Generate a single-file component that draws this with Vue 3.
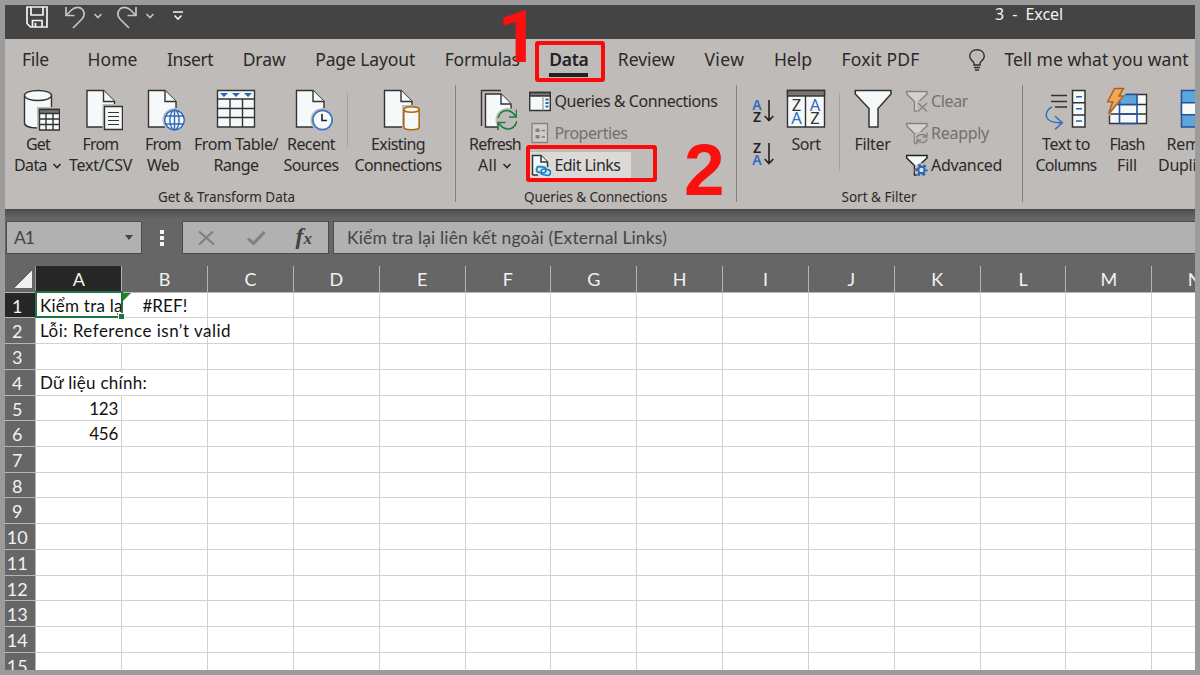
<template>
    <div class="window">
        <header class="titlebar">
            <div class="quick-access">
                <svg class="qa-save" viewBox="0 0 24 24" fill="none" stroke="#f4f4f4" stroke-width="1.7">
                    <path d="M2 2H22V22H5.500L2 18.500Z" />
                    <path d="M6 2V10H18V2M7.500 22V15.500H17V22M10.500 18V22" />
                </svg>
                <svg class="qa-undo" viewBox="0 0 22 24" fill="none" stroke="#c4c4c4" stroke-width="1.7">
                    <path d="M2 2V10.500H10.500M2.500 10L7.500 5C11 1.500 16 1.500 18.500 4.500C21 7.500 20.500 11.500 18 14L9 23" />
                </svg>
                <svg class="qa-chevron" viewBox="0 0 10 8" fill="none" stroke="#c4c4c4" stroke-width="1.6"><path d="M1.500 2L5 5.500L8.500 2" /></svg>
                <svg class="qa-redo" viewBox="0 0 22 24" fill="none" stroke="#c4c4c4" stroke-width="1.7">
                    <path d="M20 2V10.500H11.500M19.500 10L14.500 5C11 1.500 6 1.500 3.500 4.500C1 7.500 1.500 11.500 4 14L13 23" />
                </svg>
                <svg class="qa-chevron" viewBox="0 0 10 8" fill="none" stroke="#c4c4c4" stroke-width="1.6"><path d="M1.500 2L5 5.500L8.500 2" /></svg>
                <svg class="qa-more" viewBox="0 0 12 12" fill="none" stroke="#f4f4f4" stroke-width="1.6"><path d="M1 2H11M2.500 5.500L6 9L9.500 5.500" /></svg>
            </div>
            <div class="doc-title"><span v-fit="68" class="t">3&nbsp; -&nbsp; Excel</span></div>
        </header>

        <nav class="tabs">
            <div v-for="tab in tabs" :key="tab.name" class="tab" :class="{ active: tab.active, first: tab.name === 'File' }">
                <span v-fit="tab.w" class="t">{{ tab.name }}</span>
                <div v-if="tab.active" class="red-box tab-box"></div>
                <span v-if="tab.active" class="step step-one">1</span>
            </div>
            <svg class="bulb" viewBox="0 0 18 24" fill="none" stroke="#2f2d2c" stroke-width="1.4">
                <path d="M6 17V15.500C6 13 1.700 12 1.700 8.200C1.700 4.300 4.800 1.700 9 1.700S16.300 4.300 16.300 8.200C16.300 12 12 13 12 15.500V17ZM6 19.500H12M7 22H11" />
            </svg>
            <span v-fit="184" class="t">Tell me what you want</span>
        </nav>

        <section class="ribbon">
            <div class="group group-get">
                <div class="group-body">
                    <div class="big w52">
                        <svg class="icon" viewBox="0 0 44 44" fill="#f5f9f9" stroke="#333" stroke-width="1.4">
                            <path d="M8.500 8.500V36C8.500 39 14 41 22 41S35.500 39 35.500 36V8.500" />
                            <ellipse cx="22" cy="8.500" rx="13.500" ry="5" />
                            <path d="M21 20H44V44H21Z" fill="#bfbbb8" stroke="none" />
                            <path d="M23.500 22.500H43.500V43H23.500Z" />
                            <path d="M23.500 22.500H43.500V26.500H23.500Z" fill="#777" />
                            <path d="M23.500 32H43.500M23.500 37.500H43.500M30 26.500V43M37 26.500V43" />
                        </svg>
                        <span v-fit="24" class="t">Get</span>
                        <div class="drop"><span v-fit="33" class="t">Data</span><Chevron /></div>
                    </div>
                    <div class="big w73">
                        <svg class="icon" viewBox="0 0 44 44" fill="#f5f9f9" stroke="#333" stroke-width="1.4">
                            <path d="M8 3.500H24.500L35.500 14.500V40H8Z" />
                            <path d="M24.500 3.500V14.500H35.500" />
                            <path d="M23.500 17H44V44H23.500Z" fill="#bfbbb8" stroke="none" />
                            <path d="M25.500 19.500H43.500V42.500H25.500Z" />
                            <path d="M29 25.500H40M29 29.500H40M29 33.500H40M29 37.500H40" stroke-width="1.2" />
                        </svg>
                        <span v-fit="36" class="t">From</span>
                        <span v-fit="63" class="t">Text/CSV</span>
                    </div>
                    <div class="big w52">
                        <svg class="icon" viewBox="0 0 44 44" fill="#f5f9f9" stroke="#333" stroke-width="1.4">
                            <path d="M7.500 3.500H24L35 14.500V40H7.500Z" />
                            <path d="M24 3.500V14.500H35" />
                            <circle cx="33.500" cy="33" r="12" fill="#bfbbb8" stroke="none" />
                            <g stroke="#2f69bd">
                                <circle cx="33.500" cy="33" r="9.800" />
                                <ellipse cx="33.500" cy="33" rx="4.600" ry="9.800" />
                                <path d="M33.500 23V43M24.800 29H42.200M24.800 37H42.200" />
                            </g>
                        </svg>
                        <span v-fit="36" class="t">From</span>
                        <span v-fit="32" class="t">Web</span>
                    </div>
                    <div class="big w94">
                        <svg class="icon" viewBox="0 0 44 44" fill="#f5f9f9" stroke="#333" stroke-width="1.4">
                            <path d="M3.500 3.500H40.500V40H3.500Z" />
                            <path d="M3.500 12H40.500M3.500 21.500H40.500M3.500 30.500H40.500M16 12V40M28.500 12V40" />
                            <path d="M6 6H14L10 10ZM18 6H26L22 10ZM30 6H38L34 10Z" fill="#2c66b8" stroke="none" />
                        </svg>
                        <span v-fit="84" class="t">From Table/</span>
                        <span v-fit="45" class="t">Range</span>
                    </div>
                    <div class="big w56">
                        <svg class="icon" viewBox="0 0 44 44" fill="#f5f9f9" stroke="#333" stroke-width="1.4">
                            <path d="M7.500 3.500H24L35 14.500V40H7.500Z" />
                            <path d="M24 3.500V14.500H35" />
                            <circle cx="33.500" cy="33" r="12" fill="#bfbbb8" stroke="none" />
                            <circle cx="33.500" cy="33" r="9.700" stroke="#3c74c4" stroke-width="1.7" />
                            <path d="M33 27V33.500H38" fill="none" stroke="#222" stroke-width="1.6" />
                        </svg>
                        <span v-fit="48" class="t">Recent</span>
                        <span v-fit="55" class="t">Sources</span>
                    </div>
                    <i class="inner-sep"></i>
                    <div class="big w86">
                        <svg class="icon" viewBox="0 0 44 44" fill="#f5f9f9" stroke="#333" stroke-width="1.4">
                            <path d="M8.500 3.500H25L36 14.500V40H8.500Z" />
                            <path d="M25 3.500V14.500H36" />
                            <path d="M26 18H44V44H26Z" fill="#bfbbb8" stroke="none" />
                            <g stroke="#ab6a14" stroke-width="1.600">
                                <path d="M27.800 22.500V40C27.800 41.500 31 42.700 35.500 42.700S43.200 41.500 43.200 40V22.500" />
                                <ellipse cx="35.500" cy="22.500" rx="7.700" ry="2.700" />
                            </g>
                        </svg>
                        <span v-fit="54" class="t">Existing</span>
                        <span v-fit="87" class="t">Connections</span>
                    </div>
                </div>
                <div class="group-name"><span v-fit="137" class="t">Get &amp; Transform Data</span></div>
            </div>

            <div class="group group-queries">
                <div class="group-body">
                    <div class="big w58">
                        <svg class="icon" viewBox="0 0 44 44" fill="#f5f9f9" stroke="#333" stroke-width="1.4">
                            <path d="M8.500 39V3.500H28" fill="none" />
                            <path d="M12.500 7H28L38 17V40H12.500Z" />
                            <path d="M28 7V17H38" />
                            <circle cx="34.500" cy="33" r="12" fill="#bfbbb8" stroke="none" />
                            <g fill="none" stroke="#1e7e3c" stroke-width="1.600">
                                <path d="M25 31C26.500 26 30 23.500 34 23.500C37.500 23.500 40 25.500 42.500 29M43.500 22.500V30H36" />
                                <path d="M44 34C42.500 39.500 39 42 35 42C31.500 42 28.500 40 26 36.500M25 43V35.500H32.500" />
                            </g>
                        </svg>
                        <span v-fit="52" class="t">Refresh</span>
                        <div class="drop"><span v-fit="19" class="t">All</span><Chevron /></div>
                    </div>
                    <div class="list list-queries">
                        <div class="row">
                            <svg viewBox="0 0 24 24" fill="#f5f9f9" stroke="#333" stroke-width="1.4">
                                <path d="M1.700 2.500H22.300V20.500H1.700Z" />
                                <path d="M1.700 2.500H22.300V6H1.700Z" fill="#777" />
                                <path d="M15 6V20.500" stroke="#888" stroke-width="1" />
                                <path d="M19 8.500V18.500" stroke="#2c66b8" stroke-width="3" stroke-dasharray="2 1.500" />
                            </svg>
                            <span v-fit="163" class="t">Queries &amp; Connections</span>
                        </div>
                        <div class="row disabled">
                            <svg viewBox="0 0 24 24" fill="#cfcccb" stroke="#858280" stroke-width="1.3">
                                <path d="M4 1.500H19.500V20.500H4Z" />
                                <path d="M7.500 6.500H11.500V10H7.500ZM7.500 13H11.500V16.500H7.500Z" fill="#858280" stroke="none" />
                                <path d="M13.500 8.500H17M13.500 15H17" stroke-width="1.500" />
                            </svg>
                            <span v-fit="73" class="t">Properties</span>
                        </div>
                        <div class="row highlighted">
                            <svg viewBox="0 0 24 24" fill="#f5f9f9" stroke="#333" stroke-width="1.5">
                                <path d="M4.500 21V1.500H13L19.500 8V18" />
                                <path d="M13 1.500V8H19.500" />
                                <g stroke="#e0e6ea" stroke-width="5" fill="none">
                                    <rect x="9" y="13" width="8" height="5.500" rx="2.700" />
                                    <rect x="13.500" y="15.500" width="8" height="5.500" rx="2.700" />
                                </g>
                                <path d="M4.500 21H10" />
                                <g stroke="#2085c5" stroke-width="1.700" fill="none">
                                    <rect x="8.500" y="12.800" width="9.500" height="5.800" rx="2.900" transform="rotate(8 13 16)" />
                                    <rect x="13" y="15.300" width="9.500" height="5.800" rx="2.900" transform="rotate(8 18 18)" />
                                </g>
                            </svg>
                            <span v-fit="66" class="t">Edit Links</span>
                            <div class="red-box link-box"></div>
                            <span class="step step-two">2</span>
                        </div>
                    </div>
                </div>
                <div class="group-name"><span v-fit="143" class="t">Queries &amp; Connections</span></div>
            </div>

            <div class="group group-sort">
                <div class="group-body">
                    <div class="order">
                        <svg v-for="(pair, i) in ['AZ', 'ZA']" :key="pair" viewBox="0 0 24 28">
                            <text x="6" y="12.500" :class="{ blue: i === 0 }">{{ pair[0] }}</text>
                            <text x="6" y="25" :class="{ blue: i === 1 }">{{ pair[1] }}</text>
                            <path d="M18 3V23.500M13.700 19L18 23.500L22.300 19" fill="none" stroke="#222" stroke-width="1.6" />
                        </svg>
                    </div>
                    <div class="big w46">
                        <svg class="icon sort-icon" viewBox="0 0 44 44" fill="#f5f9f9" stroke="#333" stroke-width="1.4">
                            <path d="M3.500 3.500H40.500V40H3.500Z" />
                            <path d="M3.500 3.500H40.500V9H3.500Z" fill="#777" />
                            <path d="M21.500 9V40" />
                            <text x="12.500" y="23.500">Z</text><text x="12.500" y="37" class="blue">A</text>
                            <text x="31" y="23.500" class="blue">A</text><text x="31" y="37">Z</text>
                        </svg>
                        <span v-fit="29" class="t">Sort</span>
                    </div>
                    <i class="inner-sep tall"></i>
                    <div class="big w47">
                        <svg class="icon" viewBox="0 0 44 44" fill="#f5f9f9" stroke="#333" stroke-width="1.5">
                            <path d="M4.300 3.500H40V7L27 21.500V40H18V21.500L4.300 7Z" />
                        </svg>
                        <span v-fit="36" class="t">Filter</span>
                    </div>
                    <div class="list list-filter">
                        <div class="row disabled">
                            <svg viewBox="0 0 24 24" fill="#d4d1cf" stroke="#858280" stroke-width="1.4">
                                <path d="M1.700 1.500H22V4L14 11.500V21H9.500V11.500L1.700 4Z" />
                                <path d="M12 11H24V24H12Z" fill="#bfbbb8" stroke="none" />
                                <path d="M13 13L22 21.500M22 13L13 21.500" />
                            </svg>
                            <span v-fit="37" class="t">Clear</span>
                        </div>
                        <div class="row disabled">
                            <svg viewBox="0 0 24 24" fill="#d4d1cf" stroke="#858280" stroke-width="1.4">
                                <path d="M1.700 1.500H22V4L14 11.500V21H9.500V11.500L1.700 4Z" />
                                <path d="M11 10H24V24H11Z" fill="#bfbbb8" stroke="none" />
                                <path d="M11.500 16C12.500 12.500 18 11 21.500 14.500M22 10.500V15H17.500M22 17C21 21 15.500 22 12.500 18.500M12 22.500V18H16.500" fill="none" />
                            </svg>
                            <span v-fit="58" class="t">Reapply</span>
                        </div>
                        <div class="row">
                            <svg viewBox="0 0 24 24" fill="#f5f9f9" stroke="#222" stroke-width="1.5">
                                <path d="M1.700 1.500H22V4L14 11.500V21H9.500V11.500L1.700 4Z" />
                                <circle cx="16.500" cy="16" r="7" fill="#bfbbb8" stroke="none" />
                                <circle cx="16.500" cy="16" r="5" fill="none" stroke="#2463b6" stroke-width="2.500" stroke-dasharray="2.600 2.636" stroke-dashoffset="1.300" />
                                <circle cx="16.500" cy="16" r="3.200" fill="#d9e2ec" stroke="#2463b6" stroke-width="2" />
                            </svg>
                            <span v-fit="71" class="t">Advanced</span>
                        </div>
                    </div>
                </div>
                <div class="group-name"><span v-fit="75" class="t">Sort &amp; Filter</span></div>
            </div>

            <div class="group group-tools">
                <div class="group-body">
                    <div class="big w68">
                        <svg class="icon" viewBox="0 0 44 44" fill="none" stroke="#333" stroke-width="1.5">
                            <path d="M7 8.500H23M7 14.500H23M11 20H23" />
                            <path d="M28.500 3.500H41V40H28.500ZM28.500 15.700H41M28.500 28H41" fill="#f5f9f9" />
                            <path d="M32 9.700H38M32 21.700H38M32 34H38" stroke="#2463b6" />
                            <path d="M8 20C3 22 1 27 3 31C5.500 35.500 11 36 18 35.700M11 29.300L18.300 35.700L11 42.500" stroke="#2f6cc0" />
                        </svg>
                        <span v-fit="48" class="t">Text to</span>
                        <span v-fit="61" class="t">Columns</span>
                    </div>
                    <div class="big w54">
                        <svg class="icon" viewBox="0 0 44 44" fill="#f5f9f9" stroke="#333" stroke-width="1.4">
                            <path d="M4.500 7.500H41.500V36.500H4.500Z" />
                            <path d="M4.500 17.500H41.500M4.500 27H41.500" />
                            <path d="M14.500 7.500H32V17.500H14.500Z" fill="#5ca6dc" stroke="none" />
                            <path d="M14.500 17.500H32M14.500 27H32M14.500 7.500V36.500H32V7.500Z" fill="none" stroke="#23509e" stroke-width="1.600" />
                            <path d="M2 0H22V5L4 29H0V10Z" fill="#bfbbb8" stroke="none" />
                            <path d="M9.500 1.500H18.500L14 9H18.500L3.500 27L7.700 14.700H2.700Z" fill="#f2a65a" stroke="#b0621a" stroke-width="1.500" />
                        </svg>
                        <span v-fit="35" class="t">Flash</span>
                        <span v-fit="20" class="t">Fill</span>
                    </div>
                    <div class="big w82">
                        <svg class="icon" viewBox="0 0 44 44" fill="#5ca6dc" stroke="#23509e" stroke-width="1.5">
                            <path d="M7.500 3.500H30V40H7.500Z" />
                            <path d="M7.500 15.700H30V27.700H7.500Z" fill="#f5f9f9" />
                        </svg>
                        <span v-fit="59" class="t">Remove</span>
                        <span v-fit="76" class="t">Duplicates</span>
                    </div>
                </div>
            </div>
        </section>

        <section class="formula-bar">
            <div class="name-box"><span v-fit="20" class="t">A1</span><i class="caret"></i></div>
            <div class="dots"><i></i><i></i><i></i></div>
            <div class="fx-box">
                <svg viewBox="0 0 20 20" fill="none" stroke="#808080" stroke-width="2.2"><path d="M3 3.500L18 16.500M17 3.500L3 16.500" /></svg>
                <svg viewBox="0 0 20 20" fill="none" stroke="#808080" stroke-width="3"><path d="M2 10.500L7.500 15.500L18.500 4" /></svg>
                <span class="fx">f<small>x</small></span>
            </div>
            <div class="formula-input"><span v-fit="320" class="t">Kiểm tra lại liên kết ngoài (External Links)</span></div>
        </section>

        <section class="sheet">
            <div class="corner"></div>
            <div v-for="col in columns" :key="col" class="col-head" :class="{ selected: col === 'A' }">{{ col }}</div>
            <template v-for="row in 15" :key="row">
                <div class="row-head" :class="{ selected: row === 1 }">{{ row }}</div>
                <div v-for="col in columns" :key="col + row" class="cell" :class="cells[col + row]?.type">
                    <span v-if="cells[col + row]" class="value"><span v-fit="cells[col + row].w" class="t">{{ cells[col + row].text }}</span></span>
                </div>
            </template>
        </section>
    </div>
</template>

<script setup>
import { h } from 'vue';

// spreads the letters so that a label takes the given width
const vFit = {
    mounted(el, binding) {
        const diff = binding.value - el.getBoundingClientRect().width;
        el.style.letterSpacing = diff / el.textContent.length + 'px';
    }
};

const Chevron = () => h('svg', { viewBox: '0 0 10 8', width: 10, height: 8, fill: 'none', stroke: '#2b2a29', 'stroke-width': 1.6 }, [
    h('path', { d: 'M1.500 2L5 5.500L8.500 2' })
]);

const tabs = [
    { name: 'File', w: 27 },
    { name: 'Home', w: 50 },
    { name: 'Insert', w: 46 },
    { name: 'Draw', w: 43 },
    { name: 'Page Layout', w: 100 },
    { name: 'Formulas', w: 75 },
    { name: 'Data', w: 39, active: true },
    { name: 'Review', w: 57 },
    { name: 'View', w: 40 },
    { name: 'Help', w: 38 },
    { name: 'Foxit PDF', w: 78 }
];

const columns = 'ABCDEFGHIJKLMN'.split('');

const cells = {
    A1: { text: 'Kiểm tra lại', w: 87, type: 'current' },
    B1: { text: '#REF!', w: 45, type: 'error' },
    A2: { text: 'Lỗi: Reference isn’t valid', w: 191, type: 'spill' },
    A4: { text: 'Dữ liệu chính:', w: 107, type: 'spill' },
    A5: { text: '123', w: 29, type: 'number' },
    A6: { text: '456', w: 29, type: 'number' }
};
</script>

<style>
body {
    margin: 0;
    overflow: hidden;
}
</style>

<style scoped>
.window {
    width: 1200px;
    height: 675px;
    box-sizing: border-box;
    border: 5px solid #9b9b9b;
    background: #666;
    overflow: hidden;
    display: flex;
    flex-direction: column;
    font-family: "Noto Sans", "Open Sans", sans-serif;
    color: #2b2a29;
}
.t {
    display: inline-block;
    white-space: nowrap;
}
svg {
    flex: none;
}
.titlebar {
    height: 34px;
    flex: none;
    background: #444;
    display: flex;
    align-items: flex-start;
}
.quick-access {
    display: flex;
    align-items: flex-start;
    width: 990px;
    box-sizing: border-box;
    padding: 0 0 0 20px;
}
.qa-save {
    width: 24px;
    height: 24px;
}
.qa-undo, .qa-redo {
    width: 22px;
    height: 24px;
    margin-left: 15px;
}
.qa-redo {
    margin-left: 13px;
}
.qa-chevron {
    width: 10px;
    height: 8px;
    margin: 7px 0 0 7px;
}
.qa-more {
    width: 12px;
    height: 12px;
    margin: 5px 0 0 17px;
}
.doc-title {
    color: #f2f2f2;
    font-size: 16px;
    line-height: 18px;
}
.tabs {
    height: 46px;
    flex: none;
    background: #bfbbb8;
    display: flex;
    gap: 29.550px;
    padding-left: 17px;
    font-size: 17.500px;
    line-height: 41px;
    white-space: nowrap;
}
.tab {
    position: relative;
}
.tab.first {
    margin-right: 9px;
}
.tab.active {
    font-weight: 600;
    color: #222;
}
.tab.active::after {
    content: "";
    position: absolute;
    left: 0;
    top: 34px;
    width: 39px;
    height: 4px;
    background: #222;
}
.bulb {
    width: 18px;
    height: 24px;
    margin: 9px -11px 0 19px;
}
.red-box {
    position: absolute;
    box-sizing: border-box;
    border: 4px solid #fb0a0a;
    border-radius: 3px;
}
.tab-box {
    left: -14px;
    top: 2px;
    width: 70px;
    height: 41px;
    z-index: 2;
}
.step {
    position: absolute;
    font: bold 73px/73px "Liberation Sans", Arial, sans-serif;
    color: #fb0f0f;
    z-index: 3;
}
.step-one {
    left: -52px;
    top: -38px;
    font-family: Roboto, "Liberation Sans", sans-serif;
}
.ribbon {
    height: 124px;
    flex: none;
    background: #bfbbb8;
    display: flex;
    font-size: 16px;
    line-height: 21.500px;
}
.group {
    flex: none;
    box-sizing: border-box;
    display: flex;
    flex-direction: column;
    border-right: 1px solid #85817e;
    height: 117px;
}
.group-body {
    display: flex;
    flex: none;
    height: 102px;
}
.group-get {
    width: 451px;
    padding: 0 0 0 7px;
}
.group-queries {
    width: 281px;
    padding-left: 10px;
}
.group-sort {
    width: 286px;
    padding-left: 9px;
}
.group-tools {
    width: 230px;
    padding-left: 9px;
    border-right: 0;
}
.group-name {
    font-size: 13.500px;
    line-height: 20px;
    text-align: center;
}
.group-get .group-name {
    padding-right: 14px;
}
.group-queries .group-name {
    padding-right: 11px;
}
.group-sort .group-name {
    padding-right: 10px;
}
.big {
    flex: none;
    display: flex;
    flex-direction: column;
    align-items: center;
    padding-top: 2px;
}
.icon {
    width: 44px;
    height: 44px;
    margin-bottom: 2.500px;
}
.w46 { width: 46px; }
.w47 { width: 47px; }
.w52 { width: 52px; }
.w54 { width: 54px; }
.w56 { width: 56px; }
.w58 { width: 58px; }
.w68 { width: 68px; }
.w73 { width: 73px; }
.w82 { width: 82px; margin-left: 1px; }
.w86 { width: 86px; }
.w94 { width: 94px; }
.drop {
    display: flex;
    align-items: center;
    gap: 5px;
}
.inner-sep {
    width: 1px;
    height: 54px;
    margin: 8px 7px 0 8px;
    background: #a5a19e;
}
.inner-sep.tall {
    height: 78px;
    margin: 8px 9px 0 10px;
}
.list {
    display: flex;
    flex-direction: column;
    padding-top: 1px;
}
.list-queries {
    margin-left: 4px;
}
.list-filter {
    margin-left: 9px;
}
.row {
    display: flex;
    align-items: center;
    height: 32px;
    gap: 2.400px;
    position: relative;
}
.row svg {
    width: 24px;
    height: 24px;
}
.list-filter .row {
    gap: 2px;
}
.disabled {
    color: #73706e;
}
.highlighted {
    height: 28px;
    margin-top: 2px;
    width: 103px;
    background: #dcdad8;
}
.link-box {
    left: -2px;
    top: -7px;
    width: 131px;
    height: 37px;
}
.step-two {
    left: 156px;
    top: -19px;
}
.order {
    display: flex;
    flex-direction: column;
    width: 34px;
    margin-right: 3px;
    padding-top: 12px;
    gap: 15px;
}
.order svg {
    width: 24px;
    height: 28px;
    margin-left: 5px;
    overflow: visible;
}
.order text {
    font-size: 14px;
    font-weight: 600;
    text-anchor: middle;
    fill: #222;
}
.sort-icon text {
    font-size: 16.500px;
    text-anchor: middle;
    fill: #333;
    stroke: none;
}
.order text.blue, .sort-icon text.blue {
    fill: #2f6cc0;
}
.formula-bar {
    height: 57px;
    flex: none;
    box-sizing: border-box;
    padding: 12px 0 0 1px;
    display: flex;
    background: linear-gradient(#484848 0, #555 3px, #666 10px);
    font-family: Lato, "Noto Sans", sans-serif;
    font-size: 17.500px;
    color: #444;
}
.formula-bar > div {
    box-sizing: border-box;
    height: 33px;
    display: flex;
    align-items: center;
}
.name-box, .fx-box, .formula-input {
    border: 1px solid #4c4c4c;
    background: #b1b1b1;
}
.name-box {
    width: 136px;
    padding: 0 8px 0 7px;
    justify-content: space-between;
}
.caret {
    border: 4.500px solid transparent;
    border-top: 5px solid #444;
    border-bottom: 0;
}
.formula-bar > .dots {
    width: 40px;
    flex-direction: column;
    justify-content: center;
    gap: 2px;
}
.dots i {
    width: 4px;
    height: 4px;
    background: #f4f4f4;
}
.fx-box {
    width: 147px;
    padding: 0 16px 0 13px;
    justify-content: space-between;
}
.fx-box svg {
    width: 20px;
    height: 20px;
}
.fx {
    font: italic bold 24px/26px "Liberation Serif", serif;
    color: #444;
}
.fx small {
    font-size: 17px;
}
.formula-input {
    flex: 1;
    margin-left: 4px;
    padding-left: 13px;
    border-right: 0;
}
.sheet {
    display: grid;
    grid-template-columns: 31.300px repeat(14, 85.850px);
    grid-template-rows: 26.700px repeat(15, 25.720px);
    flex: none;
    font-family: Lato, "Noto Sans", sans-serif;
    font-size: 17px;
}
.corner {
    background: linear-gradient(135deg, transparent 50%, #f0f0f0 50%) no-repeat 10px 5px / 17px 17px;
    border-right: 1px solid #999;
    border-bottom: 1px solid #b5b5b5;
}
.col-head, .row-head {
    box-sizing: border-box;
    background: #666;
    color: #f2f2f2;
    text-align: center;
    font-size: 18px;
    line-height: 27px;
    border-right: 1px solid #b5b5b5;
    border-bottom: 1px solid #b5b5b5;
}
.row-head {
    padding-right: 6px;
    line-height: 26px;
}
.col-head.selected, .row-head.selected {
    background: #262626;
}
.cell {
    box-sizing: border-box;
    position: relative;
    background: #fff;
    border-right: 1px solid #d2d2d2;
    border-bottom: 1px solid #d2d2d2;
    color: #111;
    line-height: 26px;
    white-space: nowrap;
}
.value {
    display: block;
    padding: 0 3px 0 3.700px;
}
.spill {
    border-right-color: #fff;
    z-index: 1;
}
.number {
    text-align: right;
}
.error {
    text-align: center;
}
.error::before {
    content: "";
    position: absolute;
    left: 1px;
    top: 0;
    border-top: 8px solid #1a8a1a;
    border-right: 8px solid transparent;
}
.current {
    z-index: 2;
}
.current .value {
    overflow: hidden;
    padding-right: 0;
    height: 26px;
}
.current::before {
    content: "";
    position: absolute;
    inset: -2px -2px -1px -1px;
    border: 2px solid #1f7244;
}
.current::after {
    content: "";
    position: absolute;
    right: -4px;
    bottom: -3px;
    width: 5px;
    height: 5px;
    background: #1f7244;
    border: 1px solid #fff;
}
</style>
